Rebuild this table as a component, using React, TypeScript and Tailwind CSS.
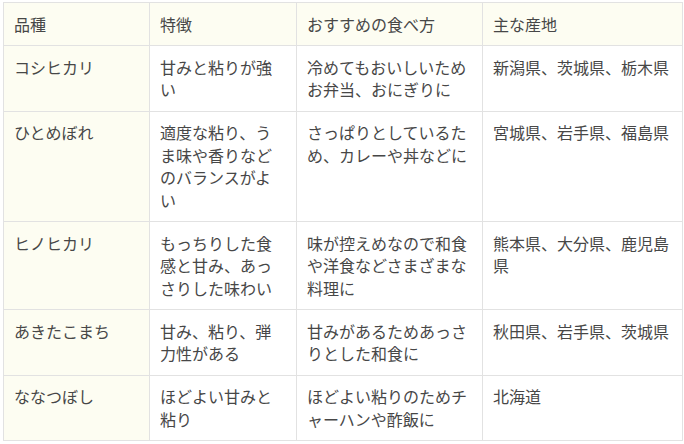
import React from 'react'

const rows = [
    ['コシヒカリ', '甘みと粘りが強い', '冷めてもおいしいためお弁当、おにぎりに', '新潟県、茨城県、栃木県'],
    ['ひとめぼれ', '適度な粘り、うま味や香りなどのバランスがよい', 'さっぱりとしているため、カレーや丼などに', '宮城県、岩手県、福島県'],
    ['ヒノヒカリ', 'もっちりした食感と甘み、あっさりした味わい', '味が控えめなので和食や洋食などさまざまな料理に', '熊本県、大分県、鹿児島県'],
    ['あきたこまち', '甘み、粘り、弾力性がある', '甘みがあるためあっさりとした和食に', '秋田県、岩手県、茨城県'],
    ['ななつぼし', 'ほどよい甘みと粘り', 'ほどよい粘りのためチャーハンや酢飯に', '北海道'],
]

const cell = 'border border-[#e2e2e2] pl-[10px] pr-[10px] pt-[9.5px] pb-[10px] align-top text-left font-normal break-all'

export default function App() {
    return (
        <div className="w-[684px] h-[444px] bg-white pl-[3px] pt-[2px] text-[#474747] text-[16px] leading-[22.5px] font-['Noto_Sans_CJK_JP','Noto_Sans',sans-serif]">
            <table className="table-fixed border-collapse w-[679px]">
                <colgroup>
                    <col className="w-[146px]" />
                    <col className="w-[147px]" />
                    <col className="w-[186px]" />
                    <col className="w-[200px]" />
                </colgroup>
                <thead>
                    <tr className="bg-[#fdfdf2]">
                        <th className={cell}>品種</th>
                        <th className={cell}>特徴</th>
                        <th className={cell}>おすすめの食べ方</th>
                        <th className={cell}>主な産地</th>
                    </tr>
                </thead>
                <tbody>
                    {rows.map((r) => (
                        <tr key={r[0]}>
                            <td className={`${cell} bg-[#fdfdf2]`}>{r[0]}</td>
                            <td className={cell}>{r[1]}</td>
                            <td className={cell}>{r[2]}</td>
                            <td className={cell}>{r[3]}</td>
                        </tr>
                    ))}
                </tbody>
            </table>
        </div>
    )
}
